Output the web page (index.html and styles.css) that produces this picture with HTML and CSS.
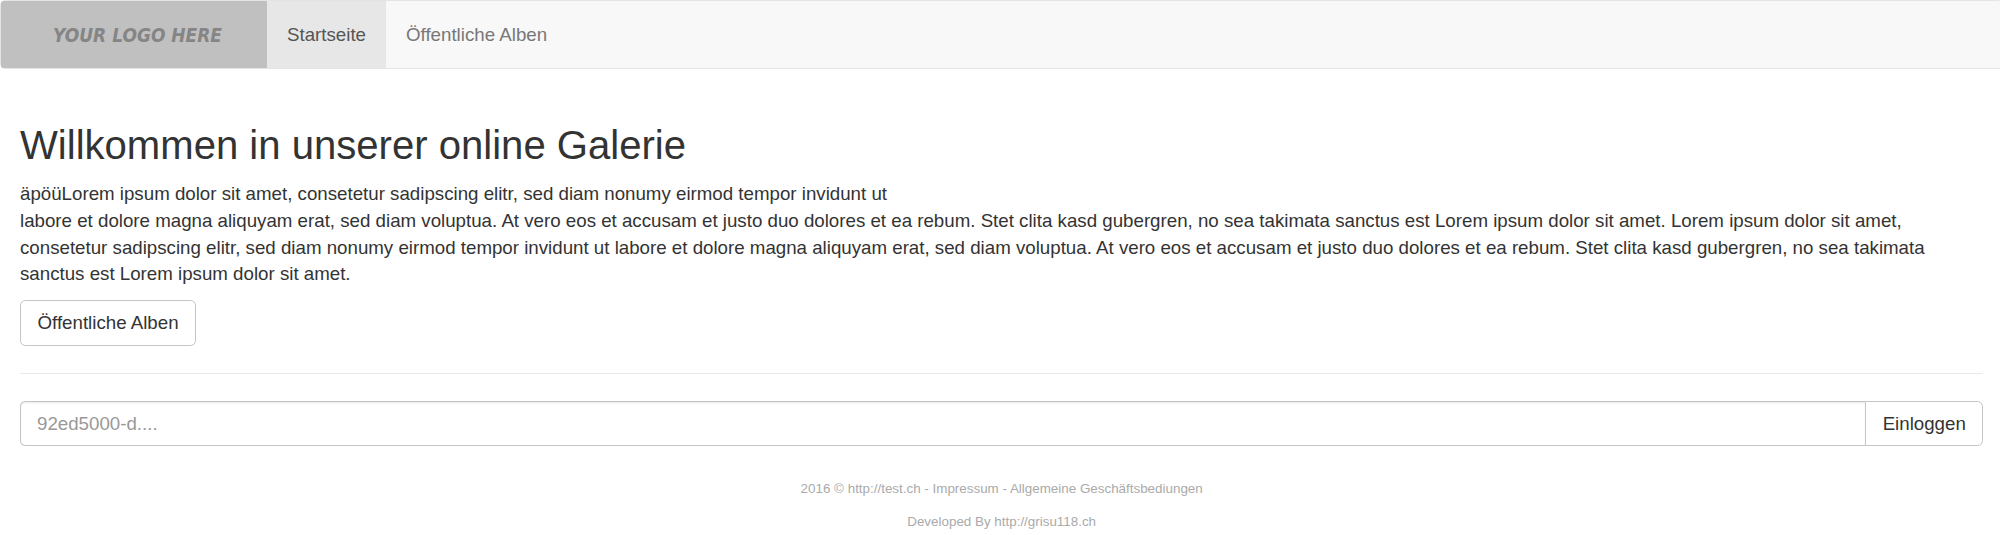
FILE: index.html
```html
<!DOCTYPE html>
<html lang="de">
<head>
<meta charset="utf-8">
<title>Galerie</title>
<link rel="stylesheet" href="styles.css">
</head>
<body>
<nav class="navbar">
  <a class="brand" href="#">
    <svg class="logo" viewBox="0 0 266 67" role="img" aria-label="Logo">
      <text class="logo-text" x="52" y="41" textLength="169" lengthAdjust="spacingAndGlyphs">YOUR LOGO HERE</text>
    </svg>
  </a>
  <a class="nav-link active" href="#">Startseite</a>
  <a class="nav-link" href="#">Öffentliche Alben</a>
</nav>
<main class="container">
  <h2 class="title">Willkommen in unserer online Galerie</h2>
  <p class="intro">äpöüLorem ipsum dolor sit amet, consetetur sadipscing elitr, sed diam nonumy eirmod tempor invidunt ut<br>labore et dolore magna aliquyam erat, sed diam voluptua. At vero eos et accusam et justo duo dolores et ea rebum. Stet clita kasd gubergren, no sea takimata sanctus est Lorem ipsum dolor sit amet. Lorem ipsum dolor sit amet, consetetur sadipscing elitr, sed diam nonumy eirmod tempor invidunt ut labore et dolore magna aliquyam erat, sed diam voluptua. At vero eos et accusam et justo duo dolores et ea rebum. Stet clita kasd gubergren, no sea takimata sanctus est Lorem ipsum dolor sit amet.</p>
  <a class="btn" href="#">Öffentliche Alben</a>
  <hr class="rule">
  <form class="input-group">
    <input class="input" type="text" placeholder="92ed5000-d....">
    <button class="btn btn-addon" type="button">Einloggen</button>
  </form>
  <footer class="footer">
    <p class="footer-line">2016 © http://test.ch - Impressum - Allgemeine Geschäftsbediungen</p>
    <p class="footer-line">Developed By http://grisu118.ch</p>
  </footer>
</main>
</body>
</html>
```
FILE: styles.css
```css
* {
  box-sizing: border-box;
}

html {
  overflow: hidden;
}

body {
  width: 2003.33px;
  margin: 0;
  background: #fff;
  color: #333;
  font-family: "Liberation Sans", Arial, sans-serif;
  font-size: 18.72px;
  line-height: 26.667px;
}

.navbar {
  display: flex;
  height: 69.33px;
  background: #f8f8f8;
  border: 1.333px solid #e4e4e4;
  border-radius: 5.33px;
}

.brand {
  width: 266px;
  height: 67px;
  background: #c0c0c0;
  border-radius: 2px 0 0 2px;
}

.logo {
  display: block;
  width: 266px;
  height: 67px;
}

.logo-text {
  fill: #858585;
  font-family: "DejaVu Sans", sans-serif;
  font-size: 19px;
  font-style: italic;
  font-weight: bold;
}

.nav-link {
  padding: 21px 20px 19px;
  color: #777;
  text-decoration: none;
}

.nav-link.active {
  background: #e7e7e7;
  color: #555;
}

.container {
  padding: 53.67px 20px 0;
}

.title {
  margin: 0 0 14.33px;
  font-size: 40.08px;
  font-weight: 500;
  line-height: 44px;
}

.intro {
  margin: 0 0 12.33px;
}

.btn {
  display: block;
  width: fit-content;
  height: 45.33px;
  padding: 9px 16.5px 7px;
  background: #fff;
  border: 1px solid #c4c4c4;
  border-radius: 5.33px;
  color: #333;
  font: inherit;
  text-decoration: none;
}

.rule {
  height: 1px;
  margin: 27px 0;
  border: 0;
  background: #e9e9e9;
}

.input-group {
  display: flex;
}

.input {
  flex: 1;
  height: 45.33px;
  padding: 9px 16px 7px;
  border: 1px solid #c4c4c4;
  border-right-width: 0;
  border-radius: 5.33px 0 0 5.33px;
  box-shadow: inset 0 1.33px 1.33px rgba(0, 0, 0, 0.075);
  color: #555;
  font: inherit;
}

.input::placeholder {
  color: #999;
  opacity: 1;
}

.btn-addon {
  border-radius: 0 5.33px 5.33px 0;
}

.footer {
  padding-top: 33px;
  color: #aaa;
  font-size: 13.4px;
  line-height: 19.05px;
  text-align: center;
}

.footer-line {
  margin: 0 0 13.6px;
}
```
